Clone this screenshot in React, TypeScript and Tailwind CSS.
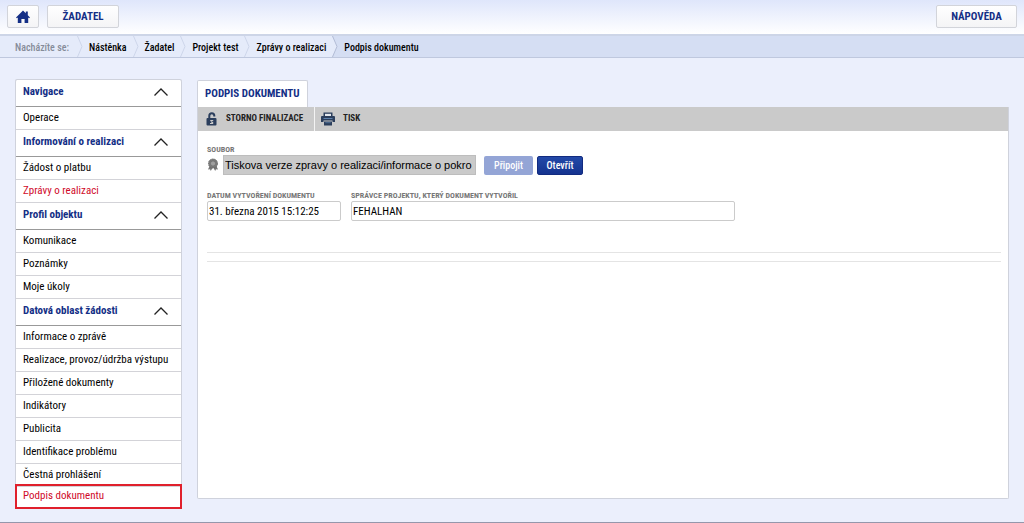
import { useState } from "react";

const crumbs = ["Nástěnka", "Žadatel", "Projekt test", "Zprávy o realizaci"];

const menu = [
  { title: "Navigace", items: ["Operace"] },
  {
    title: "Informování o realizaci",
    items: ["Žádost o platbu", "Zprávy o realizaci"],
  },
  { title: "Profil objektu", items: ["Komunikace", "Poznámky", "Moje úkoly"] },
  {
    title: "Datová oblast žádosti",
    items: [
      "Informace o zprávě",
      "Realizace, provoz/údržba výstupu",
      "Přiložené dokumenty",
      "Indikátory",
      "Publicita",
      "Identifikace problému",
      "Čestná prohlášení",
      "Podpis dokumentu",
    ],
  },
];

function HomeIcon() {
  return (
    <svg width="14" height="14" viewBox="0 0 14 14" fill="#142f86">
      <path d="M7 0.5 9.8 3.2V1.6h2v3.6L14 7.4l-.9.9-.9-.8V13H8.600V9H5.400v4H1.800V7.500l-.9.8L0 7.400z" />
    </svg>
  );
}

function LockIcon() {
  return (
    <svg width="12" height="14" viewBox="0 0 12 14">
      <path
        d="M3.300 7V3.800a2.500 2.500 0 0 1 5 0V4.600"
        fill="none"
        stroke="#2b3e5c"
        strokeWidth="2"
      />
      <rect x="0.500" y="6" width="10" height="7.500" rx="1" fill="#2b3e5c" />
      <path d="M4 8h3.200v1.200H5.600v.8h1.600v1.900H4v-1h1.600z" fill="#cacaca" />
    </svg>
  );
}

function PrintIcon() {
  return (
    <svg width="14" height="14" viewBox="0 0 14 14">
      <path d="M2.500 0.500h9V4h-9z" fill="#2b3e5c" />
      <path d="M4 1.800h6V4H4z" fill="#e4e8ee" />
      <path d="M1 4h12a1 1 0 0 1 1 1v5h-2.500V8.500h-9V10H0V5a1 1 0 0 1 1-1z" fill="#2b3e5c" />
      <path d="M2.500 6h9v1h-9z" fill="#5e82ac" />
      <path d="M3 9.500h8v4H3z" fill="#2b3e5c" />
      <path d="M4.300 10.700h5.400" stroke="#5e82ac" strokeWidth="0.700" />
    </svg>
  );
}

function SealIcon() {
  return (
    <svg width="12" height="14" viewBox="0 0 12 14">
      <path d="M3 7 1 11.500l2-.2.8 1.700L6 9l2.200 4 .8-1.700 2 .2L9 7z" fill="#777" />
      <circle cx="6" cy="5.500" r="4.500" fill="#7c7c7c" stroke="#696969" strokeDasharray="1.500 0.700" />
      <circle cx="6" cy="5.500" r="2.600" fill="#a0a0a0" stroke="#6c6c6c" strokeWidth="0.700" />
    </svg>
  );
}

function Chevron() {
  return (
    <svg width="14" height="8" viewBox="0 0 14 8" fill="none" stroke="#222" strokeWidth="1.300">
      <path d="M0.500 7.500 7 1l6.500 6.500" />
    </svg>
  );
}

// arrow shaped divider, `last` fills the space behind it with the darker bar
function Separator({ last = false }: { last?: boolean }) {
  return (
    <svg width="6" height="21" viewBox="0 0 6 21" className="shrink-0">
      {last && <path d="M0 0h6v21H0l5-10.500z" fill="#d5def3" />}
      <path d="M0.500 0 5 10.500 0.500 21" fill="none" stroke={last ? "#b3bdd6" : "#cdd6ea"} />
    </svg>
  );
}

const topButton =
  "flex h-[23px] items-center justify-center rounded-xs border border-[#d2d4da] bg-linear-to-b from-white to-[#f4f4f6] pt-px text-[11px] font-bold text-[#142f86]";
const label = "text-[8px] leading-[10px] font-bold text-[#777]";
const field =
  "h-5 w-full rounded-xs border border-[#cbcbcb] bg-white px-px text-[11px] text-black outline-none";
const action =
  "h-[19px] rounded-xs pt-px text-[10px] leading-none font-medium text-white";

export default function App() {
  const [closed, setClosed] = useState<string[]>([]);

  const toggle = (title: string) =>
    setClosed((c) =>
      c.includes(title) ? c.filter((t) => t !== title) : [...c, title],
    );

  return (
    <div className="bg-[#ebeffc] font-['Roboto_Condensed','Liberation_Sans_Narrow',Roboto,sans-serif] text-[11px] text-black">
      <header className="flex h-9 items-start border-b-2 border-[#cdd5e7] bg-linear-to-b from-[#dfe6fb] to-white px-[7px] pt-[5px]">
        <button aria-label="Domů" className={`${topButton} w-8`}>
          <HomeIcon />
        </button>
        <button className={`${topButton} ml-2 w-[72px]`}>ŽADATEL</button>
        <button className={`${topButton} ml-auto w-[81px]`}>NÁPOVĚDA</button>
      </header>

      {/* Breadcrumbs */}
      <nav className="flex h-[22px] items-stretch border-b border-[#bfc8de] bg-[#d5def3] text-[10px] leading-[23px] font-medium">
        <div className="flex bg-[#e5ebfa] pl-[15px]">
          <span className="mr-2 w-[54px] whitespace-nowrap text-[#858b99]">Nacházíte se:</span>
          {crumbs.map((c) => (
            <div key={c} className="flex">
              <Separator />
              <a href="#" className="mx-[6px] whitespace-nowrap">
                {c}
              </a>
            </div>
          ))}
          <Separator last />
        </div>
        <span className="ml-[6px]">Podpis dokumentu</span>
      </nav>

      <div className="flex items-stretch border-b-2 border-[#9597ab] px-[15px] pt-[22px] pb-[13px]">
        {/* Menu */}
        <aside className="w-[167px] shrink-0 rounded-xs border-x border-[#cfd2dc] bg-white shadow-[0_-1px_0_#cfd2dc]">
          {menu.map((group) => (
            <section key={group.title}>
              <button
                onClick={() => toggle(group.title)}
                className="flex h-[27px] w-full items-center justify-between border-b border-[#999] pr-[13px] pb-[2px] pl-[7px] font-bold whitespace-nowrap text-[#142f86]"
              >
                {group.title}
                <Chevron />
              </button>
              {!closed.includes(group.title) &&
                group.items.map((item) => (
                  <a
                    key={item}
                    href="#"
                    className={
                      item === "Podpis dokumentu"
                        ? "relative -mx-px -mt-[3px] flex h-[25px] items-center border-2 border-[#e0202c] px-[6px] text-[#d00a2a]"
                        : item === "Zprávy o realizaci"
                          ? "flex h-[23px] items-center border-b border-[#d3d3d8] px-[7px] text-[#d00a2a]"
                          : "flex h-[23px] items-center border-b border-[#d3d3d8] px-[7px] whitespace-nowrap"
                    }
                  >
                    {item}
                  </a>
                ))}
            </section>
          ))}
        </aside>

        <main className="mb-[10px] ml-[15px] flex min-w-0 flex-1 flex-col">
          <h1 className="flex h-[27px] items-center self-start rounded-t-xs border border-b-0 border-[#cfd2dc] bg-white px-[7px] text-[11px] font-bold text-[#142f86]">
            PODPIS DOKUMENTU
          </h1>
          <div className="flex-1 rounded-b-xs border border-t-0 border-[#cfd2dc] bg-white">
            <div className="flex h-6 bg-[#cacaca] text-[9px] font-bold text-[#222]">
              <button className="flex w-[117px] items-center gap-2 border-r border-[#f3f3f3] pl-2">
                <LockIcon />
                STORNO FINALIZACE
              </button>
              <button className="flex items-center gap-2 px-[6px]">
                <PrintIcon />
                TISK
              </button>
            </div>

            <div className="pt-[14px] pr-[7px] pl-[9px]">
              <label htmlFor="soubor" className={`${label} block`}>
                SOUBOR
              </label>
              <div className="flex items-center">
                <SealIcon />
                <input
                  id="soubor"
                  readOnly
                  defaultValue="Tiskova verze zpravy o realizaci/informace o pokro"
                  className="ml-1 h-5 w-[253px] border border-[#bdbdbd] bg-[#cacaca] px-px font-['Liberation_Sans',Arial,sans-serif] text-[11px] text-black outline-none"
                />
                <button disabled className={`${action} ml-2 w-[49px] bg-[#94a5d6]`}>
                  Připojit
                </button>
                <button
                  className={`${action} ml-1 w-[46px] border border-[#122b80] bg-linear-to-b from-[#2349a8] to-[#15338f]`}
                >
                  Otevřít
                </button>
              </div>

              <div className="mt-4 flex gap-[10px]">
                <div className="w-[134px] shrink-0">
                  <label htmlFor="datum" className={`${label} block whitespace-nowrap`}>
                    DATUM VYTVOŘENÍ DOKUMENTU
                  </label>
                  <input id="datum" readOnly defaultValue="31. března 2015 15:12:25" className={field} />
                </div>
                <div className="w-[384px]">
                  <label htmlFor="spravce" className={`${label} block`}>
                    SPRÁVCE PROJEKTU, KTERÝ DOKUMENT VYTVOŘIL
                  </label>
                  <input id="spravce" readOnly defaultValue="FEHALHAN" className={field} />
                </div>
              </div>

              <div className="mt-[31px] h-[10px] border-y border-[#e4e4e4]" />
            </div>
          </div>
        </main>
      </div>
    </div>
  );
}
